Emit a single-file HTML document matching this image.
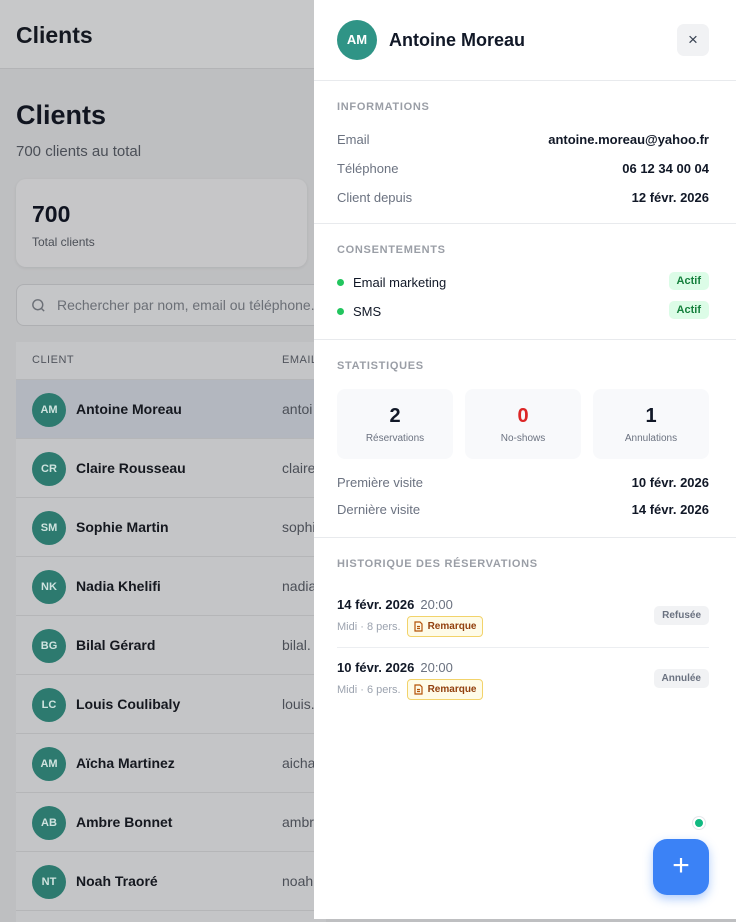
<!DOCTYPE html>
<html><head><meta charset="utf-8"><style>
*{box-sizing:border-box;margin:0;padding:0}
body{width:736px;height:919px;overflow:hidden;font-family:"Liberation Sans",sans-serif;background:#bebfc1;position:relative}
.hdr{position:absolute;left:0;top:0;width:314px;height:69px;background:#c7c8c9;border-bottom:1px solid #b3b4b6}
.hdr h1{position:absolute;left:16px;top:22px;font-size:23px;font-weight:600;color:#141820}
.t{position:absolute;left:16px;top:100px;font-size:27px;font-weight:700;color:#111520}
.sub{position:absolute;left:16px;top:143px;font-size:15px;color:#4b4f57}
.card{position:absolute;left:16px;top:179px;width:291px;height:88px;background:#c6c6c8;border-radius:10px;box-shadow:0 1px 3px rgba(0,0,0,.08)}
.card b{position:absolute;left:16px;top:22px;font-size:23px;color:#0f1320}
.card span{position:absolute;left:16px;top:56px;font-size:12px;color:#4b4f57}
.search{position:absolute;left:16px;top:284px;width:310px;height:42px;border:1px solid #aeafb2;border-radius:8px;background:#c5c6c8}
.search span{position:absolute;left:40px;top:12px;font-size:14px;color:#6b6f76;white-space:nowrap}
.tbl{position:absolute;left:16px;top:342px;width:310px;height:580px;background:#c4c5c7}
.th{height:38px;border-bottom:1px solid #b5b6b8;font-size:11px;color:#50545c;letter-spacing:.5px;position:relative}
.th span{position:absolute;top:12px}
.row{height:59px;border-bottom:1px solid #b5b6b8;position:relative}
.row.sel{background:#b3b7bf}
.av{position:absolute;left:16px;top:13px;width:34px;height:34px;border-radius:50%;background:#2d7a6f;color:#cfe3df;font-size:11px;font-weight:700;text-align:center;line-height:34px}
.nm{position:absolute;left:60px;top:21px;font-size:14px;font-weight:600;color:#15181f}
.em{position:absolute;left:266px;top:21px;font-size:14px;color:#4b4f57}
.dr{position:absolute;left:314px;top:0;width:422px;height:919px;background:#fff;color:#111827}
.sec{border-bottom:1px solid #e8eaed;position:relative}
.lab{font-size:11px;font-weight:700;color:#9a9ea6;letter-spacing:.7px;position:absolute;left:23px}
.kv{position:absolute;left:23px;right:27px;font-size:13px;color:#6b7280}
.kv b{position:absolute;right:0;top:0;color:#111827;font-weight:600}
.dot{display:inline-block;width:7px;height:7px;border-radius:50%;background:#22c55e;margin-right:9px;vertical-align:1px}
.badge{position:absolute;right:0;top:-3px;background:#dcfce7;color:#15803d;font-size:11px;font-weight:700;padding:3px 8px;border-radius:5px}
.st{position:absolute;top:389px;width:116px;height:70px;background:#f8f9fb;border-radius:8px;text-align:center}
.st b{display:block;font-size:20px;margin-top:16px}
.st span{font-size:10px;color:#6b7280}
.rs{position:absolute;left:23px;right:27px}
.rs .d{font-size:13px;font-weight:600}
.rs .d i{font-style:normal;font-weight:400;color:#6b7280;margin-left:6px}
.rs .m{font-size:11px;color:#9ca3af;margin-top:4px;display:flex;align-items:center}
.rem{display:inline-flex;align-items:center;height:21px;border:1px solid #f2d36b;background:#fefbe8;color:#92400e;font-size:10px;font-weight:700;padding:0 6px;border-radius:4px;margin-left:6px}
.rem svg{margin-right:5px}
.pill{position:absolute;right:0;top:9px;background:#f1f2f4;color:#6b7280;font-size:10px;font-weight:700;padding:4px 8px;border-radius:5px}
</style></head><body>
<div class="hdr"><h1>Clients</h1></div>
<div class="t">Clients</div>
<div class="sub">700 clients au total</div>
<div class="card"><b>700</b><span>Total clients</span></div>
<div class="search"><svg style="position:absolute;left:13px;top:12px" width="17" height="17" viewBox="0 0 24 24" fill="none" stroke="#6b6f76" stroke-width="2"><circle cx="11" cy="11" r="7"/><path d="M20 20l-4-4"/></svg><span>Rechercher par nom, email ou téléphone...</span></div>
<div class="tbl">
<div class="th"><span style="left:16px">CLIENT</span><span style="left:266px">EMAIL</span></div>
<div class="row sel"><div class="av">AM</div><div class="nm">Antoine Moreau</div><div class="em">antoi</div></div>
<div class="row"><div class="av">CR</div><div class="nm">Claire Rousseau</div><div class="em">claire</div></div>
<div class="row"><div class="av">SM</div><div class="nm">Sophie Martin</div><div class="em">sophi</div></div>
<div class="row"><div class="av">NK</div><div class="nm">Nadia Khelifi</div><div class="em">nadia</div></div>
<div class="row"><div class="av">BG</div><div class="nm">Bilal Gérard</div><div class="em">bilal.</div></div>
<div class="row"><div class="av">LC</div><div class="nm">Louis Coulibaly</div><div class="em">louis.</div></div>
<div class="row"><div class="av">AM</div><div class="nm">Aïcha Martinez</div><div class="em">aicha</div></div>
<div class="row"><div class="av">AB</div><div class="nm">Ambre Bonnet</div><div class="em">ambr</div></div>
<div class="row"><div class="av">NT</div><div class="nm">Noah Traoré</div><div class="em">noah</div></div>
</div>
<div class="dr">
<div class="sec" style="height:81px">
<div style="position:absolute;left:23px;top:20px;width:40px;height:40px;border-radius:50%;background:#2f9486;color:#fff;font-size:13px;font-weight:700;text-align:center;line-height:40px">AM</div>
<div style="position:absolute;left:75px;top:30px;font-size:18px;font-weight:600">Antoine Moreau</div>
<div style="position:absolute;left:363px;top:24px;width:32px;height:32px;border-radius:7px;background:#f1f2f4;text-align:center;line-height:31px;font-size:17px;color:#374151">×</div>
</div>
<div class="sec" style="height:143px">
<div class="lab" style="top:20px">INFORMATIONS</div>
<div class="kv" style="top:51px">Email<b>antoine.moreau@yahoo.fr</b></div>
<div class="kv" style="top:80px">Téléphone<b>06 12 34 00 04</b></div>
<div class="kv" style="top:109px">Client depuis<b>12 févr. 2026</b></div>
</div>
<div class="sec" style="height:116px">
<div class="lab" style="top:20px">CONSENTEMENTS</div>
<div class="kv" style="top:51px;color:#111827"><span class="dot"></span>Email marketing<span class="badge">Actif</span></div>
<div class="kv" style="top:80px;color:#111827"><span class="dot"></span>SMS<span class="badge">Actif</span></div>
</div>
<div class="sec" style="height:198px;position:absolute;top:340px;width:100%;border:none;border-bottom:1px solid #e8eaed">
<div class="lab" style="top:20px">STATISTIQUES</div>
<div class="kv" style="top:135px">Première visite<b>10 févr. 2026</b></div>
<div class="kv" style="top:162px">Dernière visite<b>14 févr. 2026</b></div>
</div>
<div class="st" style="left:23px"><b>2</b><span>Réservations</span></div>
<div class="st" style="left:151px"><b style="color:#dc2626">0</b><span>No-shows</span></div>
<div class="st" style="left:279px"><b>1</b><span>Annulations</span></div>
<div class="lab" style="top:558px">HISTORIQUE DES RÉSERVATIONS</div>
<div class="rs" style="top:597px;height:51px;border-bottom:1px solid #eceef1"><div class="d">14 févr. 2026<i>20:00</i></div><div class="m">Midi · 8 pers. <span class="rem"><svg width="9" height="11" viewBox="0 0 9 11" fill="none" stroke="#b45309" stroke-width="1.2"><path d="M1 1h5l2 2v7H1z"/><path d="M3 5.5h3M3 7.5h3"/></svg>Remarque</span></div><span class="pill">Refusée</span></div>
<div class="rs" style="top:660px"><div class="d">10 févr. 2026<i>20:00</i></div><div class="m">Midi · 6 pers. <span class="rem"><svg width="9" height="11" viewBox="0 0 9 11" fill="none" stroke="#b45309" stroke-width="1.2"><path d="M1 1h5l2 2v7H1z"/><path d="M3 5.5h3M3 7.5h3"/></svg>Remarque</span></div><span class="pill">Annulée</span></div>
<div style="position:absolute;left:379px;top:817px;width:12px;height:12px;border-radius:50%;background:#10b981;border:2px solid #fff;box-shadow:0 0 0 1px #e5e7eb"></div>
<div style="position:absolute;left:339px;top:839px;width:56px;height:56px;border-radius:14px;background:#3b82f6;box-shadow:0 4px 10px rgba(59,130,246,.4);color:#fff;font-size:30px;text-align:center;line-height:54px">+</div>
</div>
</body></html>
